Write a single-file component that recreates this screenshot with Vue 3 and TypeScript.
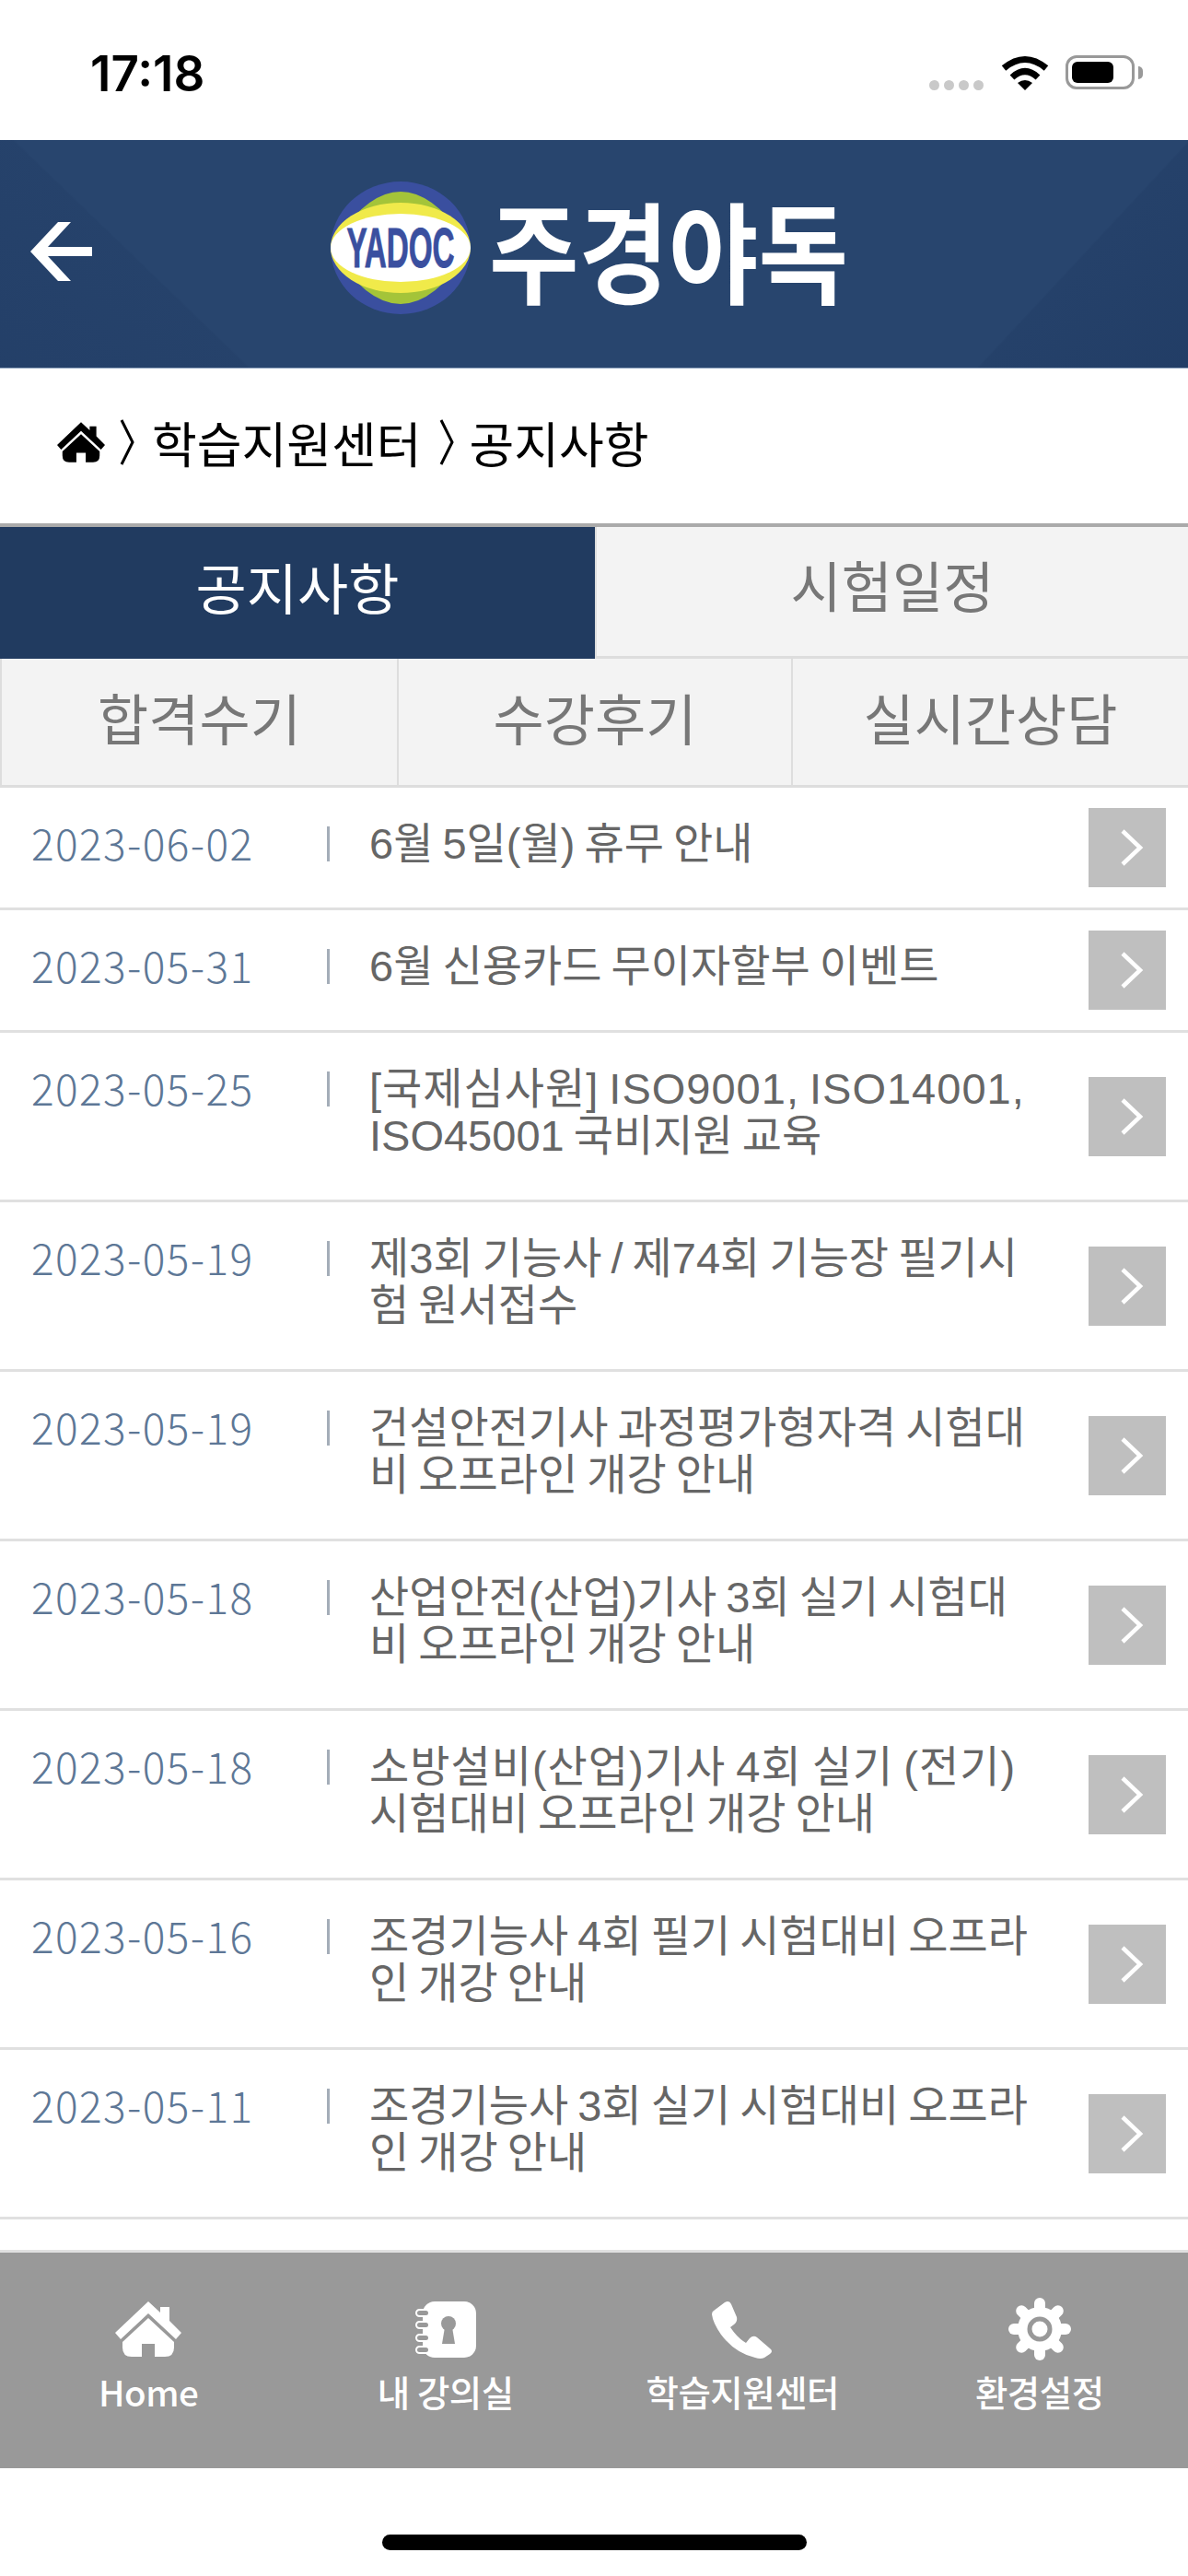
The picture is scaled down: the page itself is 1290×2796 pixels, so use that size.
<script setup lang="ts">
interface Notice { date: string; lines: string[]; spread?: boolean }

const notices: Notice[] = [
  { date: '2023-06-02', lines: ['6월 5일(월) 휴무 안내'] },
  { date: '2023-05-31', lines: ['6월 신용카드 무이자할부 이벤트'] },
  { date: '2023-05-25', lines: ['[국제심사원] ISO9001, ISO14001,', 'ISO45001 국비지원 교육'], spread: true },
  { date: '2023-05-19', lines: ['제3회 기능사 / 제74회 기능장 필기시', '험 원서접수'] },
  { date: '2023-05-19', lines: ['건설안전기사 과정평가형자격 시험대', '비 오프라인 개강 안내'] },
  { date: '2023-05-18', lines: ['산업안전(산업)기사 3회 실기 시험대', '비 오프라인 개강 안내'] },
  { date: '2023-05-18', lines: ['소방설비(산업)기사 4회 실기 (전기)', '시험대비 오프라인 개강 안내'], spread: true },
  { date: '2023-05-16', lines: ['조경기능사 4회 필기 시험대비 오프라', '인 개강 안내'] },
  { date: '2023-05-11', lines: ['조경기능사 3회 실기 시험대비 오프라', '인 개강 안내'] },
]

const subTabs = ['합격수기', '수강후기', '실시간상담']
const gearAngles = [0, 45, 90, 135, 180, 225, 270, 315]
</script>

<template>
  <div class="page">
    <svg class="defs" width="0" height="0" aria-hidden="true">
      <symbol id="house" viewBox="0 0 72 60">
        <path fill="currentColor" d="M36 0 L49 12 V6 H59 V21 L72 34 L66 41 L36 13 L6 41 L0 34 Z" />
        <path fill="currentColor" d="M36 18 L64 44 V50 Q64 60 54 60 H43 V46 H29 V60 H18 Q8 60 8 50 V44 Z" />
      </symbol>
    </svg>

    <div class="status">
      <span class="time">17:18</span>
      <div class="status-right">
        <div class="dots"><i></i><i></i><i></i><i></i></div>
        <svg class="wifi" width="52" height="39" viewBox="0 0 52 39">
          <path d="M3 15 Q26 -4 49 15" fill="none" stroke="#000" stroke-width="7" />
          <path d="M12 25 Q26 12 40 25" fill="none" stroke="#000" stroke-width="7" />
          <path d="M18 31 Q26 25 34 31 L26 39 Z" fill="#000" />
        </svg>
        <div class="battery"><div class="battery-fill"></div></div>
        <div class="battery-cap"></div>
      </div>
    </div>

    <header class="header">
      <svg class="back" width="67" height="64" viewBox="0 0 67 64">
        <path fill="#fff" d="M0 32 L30 0 H44 L19 27 H67 V37 H19 L44 64 H30 Z" />
      </svg>
      <div class="logo">
        <div class="logo-badge">
          <svg width="152" height="146" viewBox="0 0 152 146">
            <ellipse cx="76" cy="73" rx="76" ry="72" fill="#3a4f9f" />
            <path d="M0 73 Q76 -49 152 73 Q76 195 0 73 Z" fill="#a4c439" />
            <ellipse cx="76" cy="73" rx="76" ry="49" fill="#f0ea4a" />
            <ellipse cx="76" cy="73" rx="76" ry="37" fill="#fff" />
          </svg>
          <span class="logo-en">YADOC</span>
        </div>
        <span class="logo-name">주경야독</span>
      </div>
    </header>

    <nav class="crumb">
      <svg class="crumb-home" width="52" height="48"><use href="#house" /></svg>
      <svg class="crumb-sep" width="17" height="50" viewBox="0 0 17 50">
        <path d="M2 1 L14 25 L2 49" fill="none" stroke="#000" stroke-width="3" />
      </svg>
      <span>학습지원센터</span>
      <svg class="crumb-sep" width="17" height="50" viewBox="0 0 17 50">
        <path d="M2 1 L14 25 L2 49" fill="none" stroke="#000" stroke-width="3" />
      </svg>
      <span>공지사항</span>
    </nav>

    <div class="tabs-main">
      <div class="tab tab-active">공지사항</div>
      <div class="tab tab-idle">시험일정</div>
    </div>
    <div class="tabs-sub">
      <div v-for="t in subTabs" :key="t" class="tab sub">{{ t }}</div>
    </div>

    <ul class="list">
      <li v-for="(n, i) in notices" :key="i" class="row">
        <span class="date">{{ n.date }}</span>
        <span class="bar"></span>
        <div class="title" :class="{ spread: n.spread }">
          <span v-for="l in n.lines" :key="l" class="line">{{ l }}</span>
        </div>
        <div class="go">
          <svg width="26" height="42" viewBox="0 0 26 42">
            <path d="M3 3 L22 21 L3 39" fill="none" stroke="#fff" stroke-width="4.5" />
          </svg>
        </div>
      </li>
      <li class="row-tail"></li>
    </ul>

    <footer class="footer">
      <div class="foot-item">
        <div class="foot-icon">
          <svg width="72" height="60" class="white"><use href="#house" /></svg>
        </div>
        <span>Home</span>
      </div>
      <div class="foot-item">
        <div class="foot-icon">
          <svg width="66" height="61" viewBox="0 0 66 61">
            <rect x="8" y="0" width="58" height="61" rx="13" fill="#fff" />
            <g fill="#999" stroke="#fff" stroke-width="2">
              <rect x="1" y="9" width="14" height="7" rx="3.5" />
              <rect x="1" y="22" width="14" height="7" rx="3.5" />
              <rect x="1" y="36" width="14" height="7" rx="3.5" />
              <rect x="1" y="49" width="14" height="7" rx="3.5" />
            </g>
            <circle cx="36" cy="24" r="8" fill="#999" />
            <path d="M32 28 H40 L43 46 H29 Z" fill="#999" />
          </svg>
        </div>
        <span>내 강의실</span>
      </div>
      <div class="foot-item">
        <div class="foot-icon">
          <svg width="66" height="63" viewBox="0 0 66 63">
            <path fill="#fff" d="M2 11 L14 2 Q19 -1 21 4 L27 18 Q28 23 24 26 L20 29 Q28 41 37 46 L41 41 Q45 37 49 40 L63 52 Q67 55 63 58 L57 62 Q53 64 47 62 Q25 57 10 37 Q1 24 0 15 Q0 12 2 11 Z" />
          </svg>
        </div>
        <span>학습지원센터</span>
      </div>
      <div class="foot-item">
        <div class="foot-icon">
          <svg width="68" height="68" viewBox="0 0 68 68">
            <g fill="#fff">
              <circle cx="34" cy="34" r="24" />
              <rect v-for="a in gearAngles" :key="a" x="28" y="0" width="12" height="24" rx="6" :transform="`rotate(${a} 34 34)`" />
            </g>
            <circle cx="34" cy="34" r="11" fill="#fff" stroke="#999" stroke-width="5" />
          </svg>
        </div>
        <span>환경설정</span>
      </div>
    </footer>

    <div class="home-area"><div class="home-indicator"></div></div>
  </div>
</template>

<style scoped>
.page {
  width: 1290px;
  height: 2796px;
  display: flex;
  flex-direction: column;
  background: #fff;
  font-family: "Noto Sans CJK KR", "Noto Sans", sans-serif;
  overflow: hidden;
}
.defs { position: absolute; }

.status {
  height: 152px;
  flex: none;
  display: flex;
  justify-content: space-between;
  padding: 58px 49px 0 98px;
  box-sizing: border-box;
}
.time {
  font-family: Inter, "Liberation Sans", sans-serif;
  font-weight: 600;
  font-size: 53px;
  line-height: 44px;
  color: #000;
}
.status-right { display: flex; align-items: flex-end; height: 40px; }
.dots { display: flex; gap: 5px; margin-right: 19px; }
.dots i { width: 11px; height: 11px; border-radius: 50%; background: #c9c9c9; display: block; }
.wifi { margin-right: 18px; }
.battery {
  width: 75px;
  height: 37px;
  margin-bottom: 1px;
  box-sizing: border-box;
  border: 3px solid #999;
  border-radius: 12px;
  padding: 4px;
}
.battery-fill { width: 45px; height: 100%; background: #000; border-radius: 6px; }
.battery-cap { width: 5px; height: 14px; margin: 0 0 12px 4px; background: #999; border-radius: 0 6px 6px 0; }

.header {
  height: 248px;
  flex: none;
  box-sizing: border-box;
  border-bottom: 1px solid #8ea2bd;
  display: flex;
  align-items: center;
  justify-content: center;
  position: relative;
  padding: 0 10px 13px 0;
  background:
    linear-gradient(44deg, rgba(25, 50, 90, 0.28) 0, rgba(25, 50, 90, 0.16) 17.4%, rgba(25, 50, 90, 0) 17.6%),
    linear-gradient(313deg, rgba(25, 50, 90, 0.4) 0, rgba(25, 50, 90, 0.2) 14.9%, rgba(25, 50, 90, 0) 15.1%),
    #28456e;
}
.back { position: absolute; left: 33px; top: 89px; }
.logo { display: flex; align-items: center; gap: 20px; }
.logo-badge {
  position: relative;
  width: 152px;
  height: 146px;
  flex: none;
}
.logo-badge svg { display: block; }
.logo-en {
  position: absolute;
  left: 0;
  top: 0;
  width: 152px;
  height: 146px;
  display: flex;
  align-items: center;
  justify-content: center;
  font-family: "Liberation Sans", sans-serif;
  font-weight: 700;
  font-size: 62px;
  line-height: 146px;
  color: #3a4f9f;
  transform: scaleX(0.536);
  white-space: nowrap;
  -webkit-text-stroke: 1px #3a4f9f;
}
.logo-name {
  font-weight: 700;
  font-size: 106px;
  line-height: 128px;
  color: #fff;
  white-space: nowrap;
  transform: scaleY(1.13);
}

.crumb {
  height: 168px;
  flex: none;
  box-sizing: border-box;
  display: flex;
  align-items: center;
  padding: 0 0 8px 62px;
  font-size: 53px;
  color: #000;
}
.crumb span { white-space: nowrap; }
.crumb-home { color: #000; margin-right: 16px; flex: none; }
.crumb-sep { flex: none; margin-right: 18px; }
.crumb span + .crumb-sep { margin-left: 19px; margin-right: 16px; }

.tabs-main {
  height: 147px;
  flex: none;
  box-sizing: border-box;
  border-top: 4px solid #aaa;
  display: grid;
  grid-template-columns: 646px 1fr;
}
.tab {
  display: flex;
  align-items: center;
  justify-content: center;
  box-sizing: border-box;
  font-size: 60px;
  white-space: nowrap;
  padding-bottom: 17px;
}
.tab-active { background: #213b60; color: #fff; }
.tab-idle {
  background: #f3f3f3;
  color: #777;
  border-left: 2px solid #ddd;
  border-bottom: 3px solid #ddd;
}
.tabs-sub {
  height: 140px;
  flex: none;
  display: grid;
  grid-template-columns: 431px 428px 1fr;
}
.sub {
  background: #f3f3f3;
  color: #777;
  border-left: 2px solid #ddd;
  border-bottom: 3px solid #ddd;
  padding-bottom: 13px;
}

.list { list-style: none; margin: 0; padding: 0; flex: none; }
.row {
  display: flex;
  align-items: flex-start;
  box-sizing: border-box;
  padding: 22px 24px 22px 34px;
  border-bottom: 3px solid #e0e0e0;
}
.date {
  width: 321px;
  flex: none;
  margin: 12px 0 23px;
  font-size: 46px;
  font-weight: 300;
  letter-spacing: 1.4px;
  line-height: 51px;
  color: #5d7796;
  white-space: nowrap;
}
.bar {
  width: 3px;
  height: 38px;
  flex: none;
  margin: 20px 43px 0 0;
  background: #a4adb8;
}
.title {
  flex: 1;
  min-width: 0;
  margin: 13px 0 22px;
  font-family: "Liberation Sans", "Noto Sans CJK KR", sans-serif;
  font-size: 47px;
  line-height: 51px;
  word-spacing: -3px;
  color: #666;
}
.line { display: block; white-space: nowrap; }
.spread .line:first-child { letter-spacing: 1px; }
.go {
  width: 84px;
  height: 86px;
  flex: none;
  align-self: center;
  background: #bfbfbf;
  display: flex;
  align-items: center;
  justify-content: center;
  padding-left: 10px;
  box-sizing: border-box;
}
.row-tail {
  height: 36px;
  box-sizing: border-box;
  border-bottom: 3px solid #e0e0e0;
}

.footer {
  height: 234px;
  flex: none;
  background: #999;
  display: grid;
  grid-template-columns: repeat(4, 1fr);
}
.foot-item {
  display: flex;
  flex-direction: column;
  align-items: center;
  color: #fff;
  font-size: 38.5px;
  font-weight: 500;
  letter-spacing: -0.5px;
  white-space: nowrap;
}
.foot-icon {
  height: 72px;
  margin-top: 47px;
  display: flex;
  align-items: center;
  justify-content: center;
}
.foot-item span { line-height: 44px; margin-top: 9px; }
.white { color: #fff; }

.home-area {
  flex: 1;
  display: flex;
  justify-content: center;
  align-items: flex-start;
  padding-top: 72px;
}
.home-indicator { width: 461px; height: 17px; background: #000; border-radius: 9px; }
</style>

<style>
html, body { margin: 0; background: #fff; }
</style>
